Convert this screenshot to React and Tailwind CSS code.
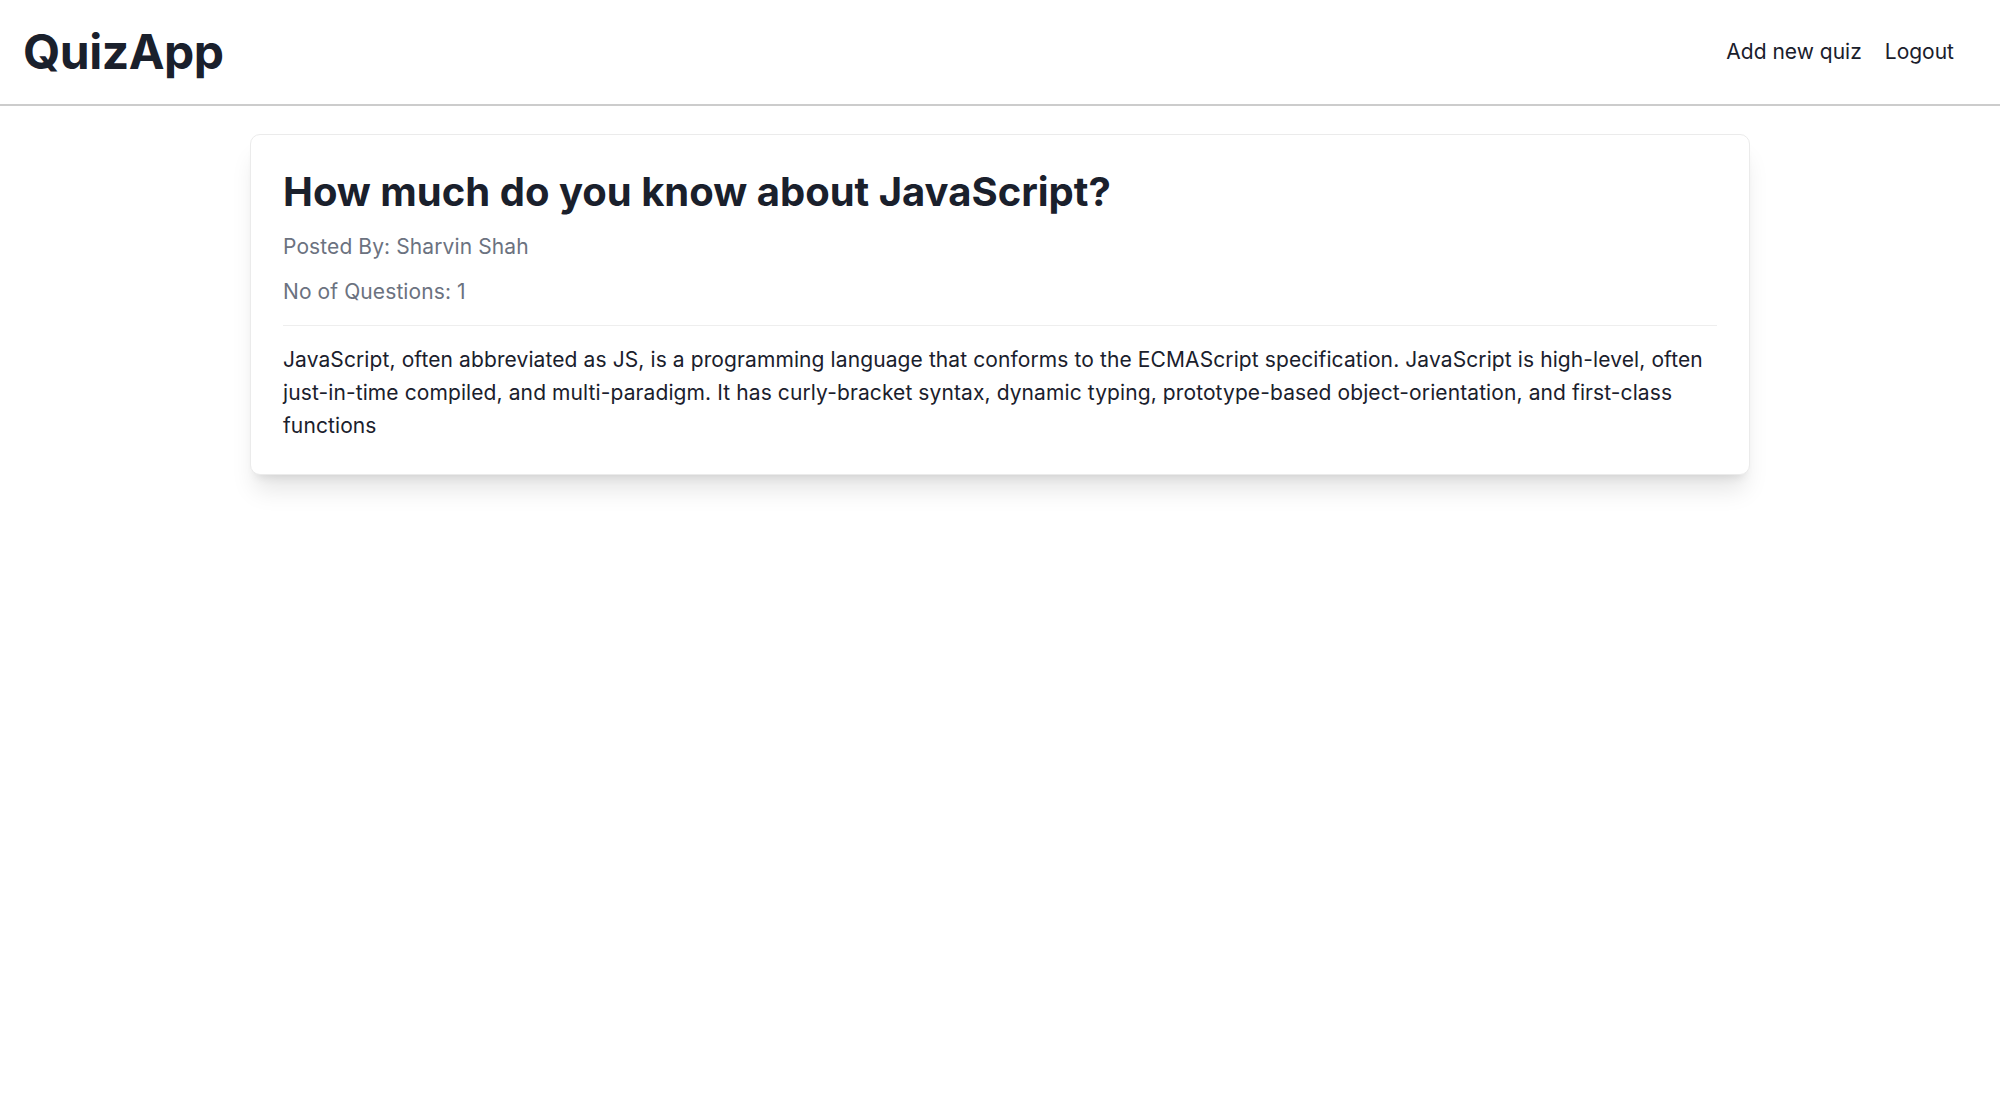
export default function App() {
  return (
    <div className="min-h-screen bg-white text-[#1a202c] font-['Inter','Liberation_Sans',sans-serif]">
      {/* top bar */}
      <header className="flex h-[106px] items-center justify-between border-b-2 border-[#cccccc] pl-[23px] pr-[46px]">
        <h1 className="text-[48px] font-bold leading-none tracking-[-0.5px]">QuizApp</h1>
        <nav className="flex items-center gap-[23px] text-[21px]">
          <a href="#" className="hover:underline">Add new quiz</a>
          <a href="#" className="hover:underline">Logout</a>
        </nav>
      </header>

      {/* quiz card */}
      <section className="mx-auto mt-[28px] w-[1500px] rounded-[10px] border border-[#ebebeb] bg-white p-8 shadow-[0_20px_25px_-5px_rgba(0,0,0,0.1),0_8px_10px_-6px_rgba(0,0,0,0.1)]">
        <h2 className="text-[40px] font-bold leading-[50px]">How much do you know about JavaScript?</h2>
        <p className="mt-[15px] text-[21px] leading-[30px] tracking-[0.1px] text-[#6b7280]">Posted By: Sharvin Shah</p>
        <p className="mt-[15px] text-[21px] leading-[30px] tracking-[0.1px] text-[#6b7280]">No of Questions: 1</p>
        <hr className="mt-[18px] border-[#eeeeee]" />
        <p className="mt-[17px] text-[21px] leading-[33px] tracking-[0.1px]">
          JavaScript, often abbreviated as JS, is a programming language that conforms to the ECMAScript
          specification. JavaScript is high-level, often just-in-time compiled, and multi-paradigm. It has
          curly-bracket syntax, dynamic typing, prototype-based object-orientation, and first-class functions
        </p>
      </section>
    </div>
  );
}
